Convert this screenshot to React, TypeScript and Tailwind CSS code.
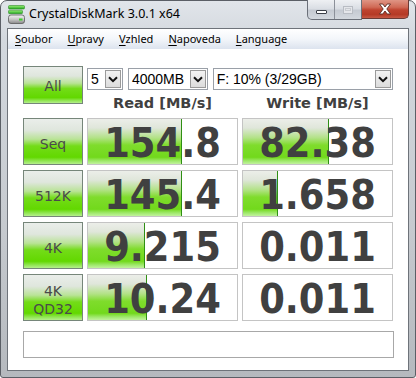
import React from "react";

type Row = {
  label: string[];
  read: string;
  readBar: number;
  write: string;
  writeBar: number;
};

const rows: Row[] = [
  { label: ["Seq"], read: "154.8", readBar: 94, write: "82.38", writeBar: 86 },
  { label: ["512K"], read: "145.4", readBar: 94, write: "1.658", writeBar: 35 },
  { label: ["4K"], read: "9.215", readBar: 57, write: "0.011", writeBar: 0 },
  { label: ["4K", "QD32"], read: "10.24", readBar: 59, write: "0.011", writeBar: 0 },
];

const greenBtn =
  "bg-[linear-gradient(to_bottom,#eaeeea_0%,#dfe6dd_25%,#b9e396_45%,#73dc18_60%,#62d800_85%,#8fe550_93%,#b5ef8c_100%)] border border-[#76867a]";

function AppIcon() {
  return (
    <svg width="17" height="19" viewBox="0 0 17 19">
      <defs>
        <linearGradient id="g1" x1="0" y1="0" x2="0" y2="1">
          <stop offset="0" stopColor="#9cf07a" />
          <stop offset="1" stopColor="#22a81e" />
        </linearGradient>
        <linearGradient id="d1" x1="0" y1="0" x2="0" y2="1">
          <stop offset="0" stopColor="#f4f4f4" />
          <stop offset="0.5" stopColor="#c8c8c8" />
          <stop offset="1" stopColor="#8a8a8a" />
        </linearGradient>
      </defs>
      <rect x="0.5" y="0.5" width="16" height="3.5" rx="1" fill="url(#g1)" stroke="#2f8a2a" strokeWidth="0.6" />
      <rect x="0.5" y="5.2" width="14" height="3.5" rx="1" fill="url(#g1)" stroke="#2f8a2a" strokeWidth="0.6" />
      <rect x="0.5" y="10" width="16" height="8.5" rx="2.5" fill="url(#d1)" stroke="#5b5b5b" strokeWidth="0.8" />
      <rect x="11" y="13.5" width="3.5" height="2" fill="#3ccf2a" />
    </svg>
  );
}

function WindowButtons() {
  return (
    <div className="flex self-start mt-[-1px]">
      <div className="flex rounded-bl-[5px] border border-t-0 border-[#6b7079] bg-[linear-gradient(to_bottom,#eef0f3_0%,#dadee4_45%,#c5cad2_55%,#d3d8de_100%)] overflow-hidden">
        <div className="w-[27px] h-[19px] flex items-center justify-center border-r border-[#8b9099]">
          <div className="w-[11px] h-[4px] bg-white border border-[#3a3f47] rounded-[1px] mt-[5px]" />
        </div>
        <div className="w-[26px] h-[19px] flex items-center justify-center">
          <div className="w-[10px] h-[8px] border border-[#b8bcc3] bg-[#e4e6ea] flex items-center justify-center">
            <div className="w-[6px] h-[3px] border border-[#c8cbd0]" />
          </div>
        </div>
      </div>
      <div className="w-[47px] h-[19px] flex items-center justify-center rounded-br-[5px] border border-t-0 border-l-0 border-[#6b3b36] bg-[linear-gradient(to_bottom,#df9585_0%,#d06a56_40%,#bf4430_55%,#b53a26_80%,#c65844_100%)]">
        <svg width="14" height="12" viewBox="0 0 14 12">
          <path
            d="M1.5 1 L4.8 1 L7 4 L9.2 1 L12.5 1 L8.8 6 L12.5 11 L9.2 11 L7 8 L4.8 11 L1.5 11 L5.2 6 Z"
            fill="#ffffff"
            stroke="#5a2a22"
            strokeWidth="0.9"
            strokeLinejoin="round"
          />
        </svg>
      </div>
    </div>
  );
}

function Select({ text, width }: { text: string; width: string }) {
  return (
    <div className={`${width} h-[22px] flex items-center border border-[#9aa0a8] bg-white p-[1px]`}>
      <span className="flex-1 pl-[2px] text-[14px] leading-none text-black font-['Liberation_Sans',sans-serif]">
        {text}
      </span>
      <div className="w-[16px] h-full flex items-center justify-center border border-[#9a9a9a] bg-[linear-gradient(to_bottom,#f3f3f3,#dcdcdc)]">
        <svg width="10" height="7" viewBox="0 0 10 7">
          <path d="M1 1.2 L5 5.2 L9 1.2" fill="none" stroke="#111" strokeWidth="2" />
        </svg>
      </div>
    </div>
  );
}

function ValueBox({ value, bar }: { value: string; bar: number }) {
  return (
    <div className="relative h-full border border-[#c4c4c4] bg-white flex items-center justify-center">
      {bar > 0 && (
        <div
          className="absolute left-0 top-0 bottom-0 border-r border-[#2f8f14] bg-[linear-gradient(to_bottom,#eceee9_0%,#dfe6da_20%,#b2e286_42%,#7fdc2c_58%,#72d91c_85%,#9ee86a_93%,#c2f29e_100%)]"
          style={{ width: bar }}
        />
      )}
      <span className="relative text-[41px] font-bold leading-[40px] text-[#404040] font-['DejaVu_Sans_Condensed','DejaVu_Sans',sans-serif] font-stretch-condensed mt-[3px]">
        {value}
      </span>
    </div>
  );
}

function App() {
  return (
    <div className="w-[416px] h-[378px] flex flex-col rounded-t-[7px] rounded-b-[3px] border border-[#5b5f66] px-[6px] pb-[6px] bg-[linear-gradient(to_bottom,#e1e5ea_0%,#d3d8de_10%,#c6cacf_60%,#b5b9be_100%)] font-['Noto_Sans',sans-serif]">
      {/* title bar */}
      <div className="h-[27px] flex items-center shrink-0">
        <div className="pl-[1px] flex items-center">
          <AppIcon />
        </div>
        <span className="ml-[4px] text-[12.5px] text-black">CrystalDiskMark 3.0.1 x64</span>
        <div className="ml-auto self-start">
          <WindowButtons />
        </div>
      </div>

      {/* client */}
      <div className="flex-1 flex flex-col border border-[#6e737a] bg-white">
        <div className="h-[20px] shrink-0 flex items-center gap-[15px] pl-[7px] text-[11px] text-black bg-[linear-gradient(to_bottom,#ffffff_0%,#f3f6fa_50%,#dce3ee_100%)]">
          <span>
            <span className="underline underline-offset-2">S</span>oubor
          </span>
          <span>
            <span className="underline underline-offset-2">U</span>pravy
          </span>
          <span>
            <span className="underline underline-offset-2">V</span>zhled
          </span>
          <span>
            <span className="underline underline-offset-2">N</span>apoveda
          </span>
          <span>
            <span className="underline underline-offset-2">L</span>anguage
          </span>
        </div>

        <div className="flex-1 flex flex-col pl-[15px] pt-[17px]">
          {/* top block */}
          <div className="h-[52px] flex gap-[4px]">
            <div className={`w-[60px] h-[38px] flex items-center justify-center pt-[2px] text-[14px] text-[#4a4a4a] font-['DejaVu_Sans',sans-serif] ${greenBtn}`}>
              All
            </div>
            <div className="w-[306px] flex flex-col">
              <div className="mt-[2px] flex gap-[5px]">
                <Select text="5" width="w-[36px]" />
                <Select text="4000MB" width="w-[80px]" />
                <Select text="F: 10% (3/29GB)" width="w-[181px]" />
              </div>
              <div className="flex-1 grid grid-cols-[151px_151px] gap-x-[4px] items-center text-[14.5px] font-bold text-[#404040] font-['DejaVu_Sans',sans-serif]">
                <div className="text-center">Read [MB/s]</div>
                <div className="text-center">Write [MB/s]</div>
              </div>
            </div>
          </div>

          {/* result rows */}
          <div className="flex flex-col gap-[5px]">
            {rows.map((r) => (
              <div key={r.label.join("")} className="h-[47px] grid grid-cols-[60px_151px_151px] gap-x-[4px]">
                <div
                  className={`flex flex-col items-center justify-center pt-[4px] text-[14px] leading-[18px] text-[#4a4a4a] font-['DejaVu_Sans',sans-serif] ${greenBtn}`}
                >
                  {r.label.map((l) => (
                    <span key={l}>{l}</span>
                  ))}
                </div>
                <ValueBox value={r.read} bar={r.readBar} />
                <ValueBox value={r.write} bar={r.writeBar} />
              </div>
            ))}
          </div>

          {/* status */}
          <div className="mt-[10px] w-[371px] h-[27px] border border-[#a8a8a8] bg-white" />
        </div>
      </div>
    </div>
  );
}

export default App;
